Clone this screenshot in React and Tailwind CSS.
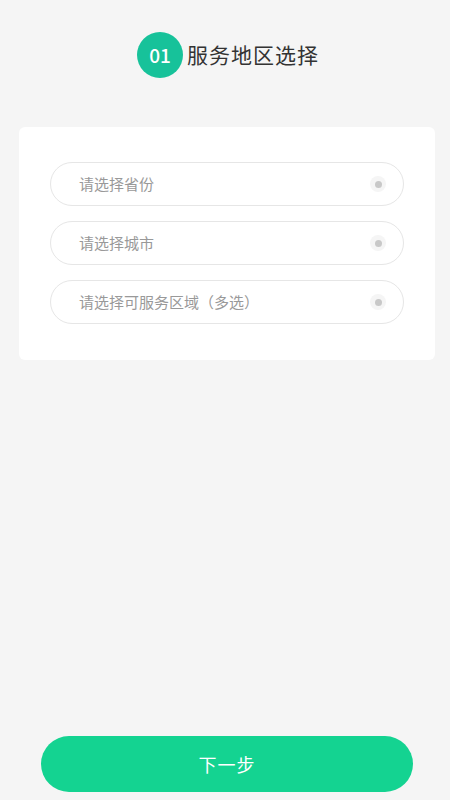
export default function App() {
  const fields = ["请选择省份", "请选择城市", "请选择可服务区域（多选）"];

  return (
    <div
      className="min-h-[800px] bg-[#f5f5f5] flex flex-col"
      style={{ fontFamily: '"Noto Sans CJK SC", "Noto Sans", sans-serif' }}
    >
      {/* step header */}
      <div className="flex items-center justify-center pt-[32px] pl-[6px]">
        <div className="w-[46px] h-[46px] rounded-full bg-[#17c29a] flex items-center justify-center text-white text-[19px] font-medium">
          01
        </div>
        <div className="ml-[4px] text-[21px] text-[#333] tracking-[1px]">服务地区选择</div>
      </div>

      {/* select card */}
      <div className="mx-[19px] mt-[49px] w-[416px] bg-white rounded-[6px] pt-[35px] pb-[36px] flex flex-col items-center gap-[15px]">
        {fields.map((f) => (
          <div
            key={f}
            className="w-[354px] h-[44px] rounded-full border border-[#e6e6e6] flex items-center pl-[28px] pr-[17px]"
          >
            <span className="flex-1 text-[15px] text-[#999] [text-spacing-trim:space-all]">{f}</span>
            <span className="w-[16px] h-[16px] rounded-full bg-[#f5f5f5] flex items-center justify-center">
              <span className="w-[7px] h-[7px] rounded-full bg-[#c8c8c8]" />
            </span>
          </div>
        ))}
      </div>

      <div className="flex-1" />

      {/* next button */}
      <div className="flex justify-center pb-[8px] pl-[4px]">
        <button className="w-[372px] h-[56px] rounded-full bg-[#14d391] text-white text-[18px] tracking-[1px]">
          下一步
        </button>
      </div>
    </div>
  );
}
